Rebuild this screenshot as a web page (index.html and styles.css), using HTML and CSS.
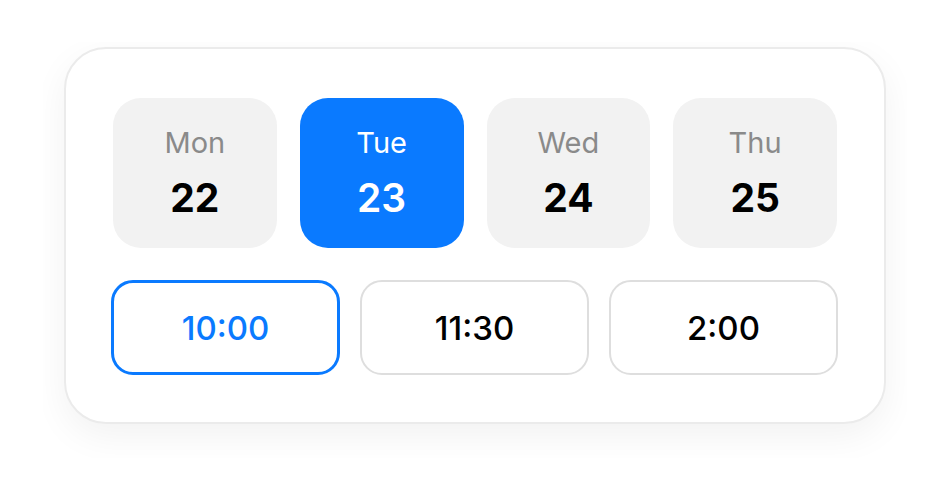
FILE: index.html
```html
<!DOCTYPE html>
<html>
<head>
<meta charset="utf-8">
<link rel="stylesheet" href="styles.css">
</head>
<body>
<div class="stage">
  <div class="frame">
    <div class="card">
      <div class="days">
        <div class="day"><span class="dname">Mon</span><span class="dnum">22</span></div>
        <div class="day active"><span class="dname">Tue</span><span class="dnum">23</span></div>
        <div class="day"><span class="dname">Wed</span><span class="dnum">24</span></div>
        <div class="day"><span class="dname">Thu</span><span class="dnum">25</span></div>
      </div>
      <div class="times">
        <div class="time selected">10:00</div>
        <div class="time">11:30</div>
        <div class="time">2:00</div>
      </div>
    </div>
  </div>
</div>
</body>
</html>
```
FILE: styles.css
```css
html, body {
  margin: 0;
  padding: 0;
  background: #ffffff;
}
.stage {
  padding: 42px 0 0 43px;
  font-family: Inter, "Noto Sans", sans-serif;
}
.frame {
  box-sizing: border-box;
  width: 864px;
  height: 416px;
  overflow: hidden;
  padding: 5px 0 0 21px;
}
.card {
  box-sizing: border-box;
  width: 822px;
  height: 377px;
  border: 2px solid #ebebeb;
  border-radius: 42px;
  background: #ffffff;
  box-shadow: 0 12px 36px rgba(0, 0, 0, 0.055);
  padding: 49px 46px 0 45px;
  display: flex;
  flex-direction: column;
  gap: 32px;
}
.days {
  display: grid;
  grid-template-columns: repeat(4, 1fr);
  gap: 23px;
  padding: 0 1px 0 2px;
}
.day {
  height: 150px;
  border-radius: 28px;
  background: #f2f2f2;
  display: flex;
  flex-direction: column;
  align-items: center;
  justify-content: center;
  gap: 15px;
}
.dname {
  font-size: 29px;
  color: #8a8a8a;
  line-height: 36px;
  margin-top: -2px;
}
.dnum {
  font-size: 39px;
  font-weight: 650;
  color: #000;
  line-height: 44px;
}
.day.active {
  background: #0a7aff;
}
.day.active .dname,
.day.active .dnum {
  color: #ffffff;
}
.day.active .dnum {
  font-weight: 600;
}
.times {
  display: grid;
  grid-template-columns: repeat(3, 1fr);
  gap: 20px;
}
.time {
  box-sizing: border-box;
  height: 95px;
  border: 2px solid #dedede;
  border-radius: 22px;
  display: flex;
  align-items: center;
  justify-content: center;
  font-size: 33px;
  font-weight: 500;
  color: #000;
}
.time.selected {
  border: 3px solid #0a7aff;
  color: #0a7aff;
}
```
